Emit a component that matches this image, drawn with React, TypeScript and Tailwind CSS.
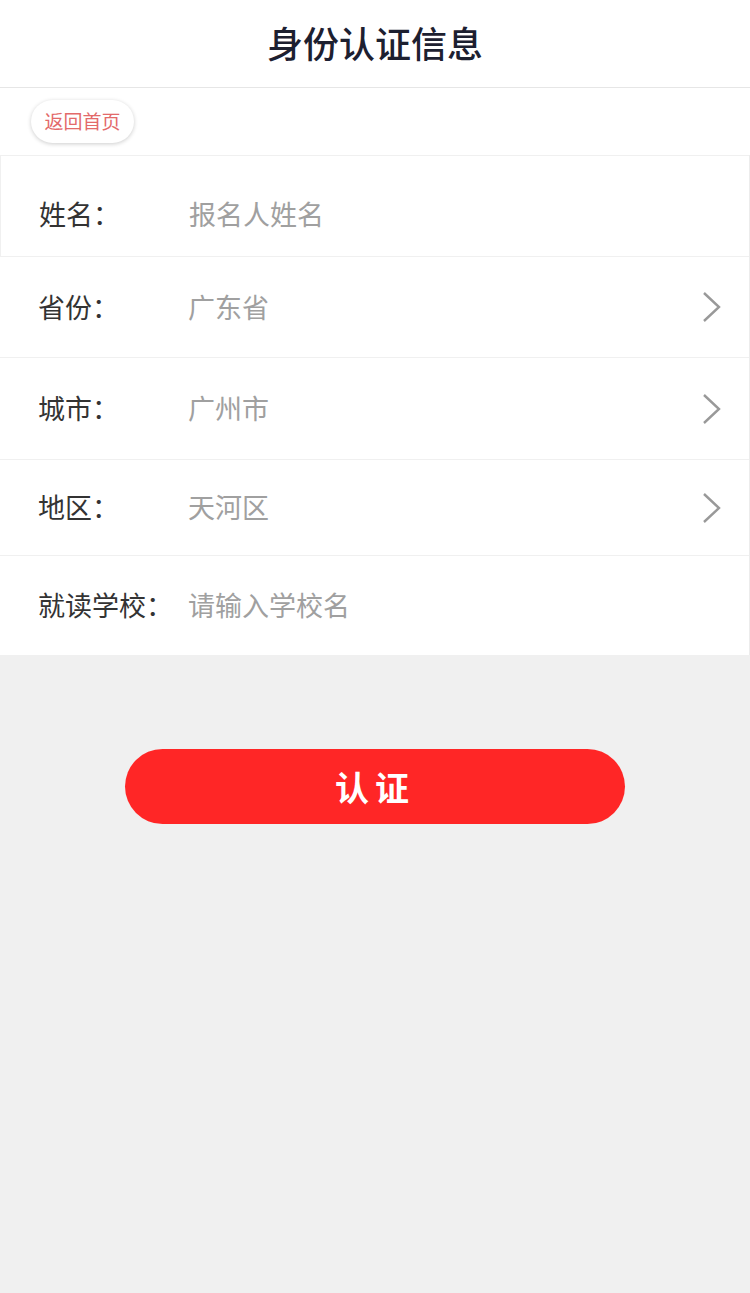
const font = { fontFamily: '"Noto Sans CJK SC", "Noto Sans", sans-serif' };

type Row = { label: string; value: string; arrow?: boolean; h: string };

const rows: Row[] = [
  { label: "姓名：", value: "报名人姓名", h: "h-[101px] pt-[16px]" },
  { label: "省份：", value: "广东省", arrow: true, h: "h-[101px]" },
  { label: "城市：", value: "广州市", arrow: true, h: "h-[102px]" },
  { label: "地区：", value: "天河区", arrow: true, h: "h-[96px]" },
  { label: "就读学校：", value: "请输入学校名", h: "h-[100px]" },
];

function Chevron() {
  return (
    <svg width="20" height="32" viewBox="0 0 20 32" fill="none" className="mr-[27px]">
      <polyline points="2,2 17,16 2,30" stroke="#999" strokeWidth="2.4" strokeLinejoin="miter" />
    </svg>
  );
}

export default function App() {
  return (
    <div className="flex min-h-[1293px] w-[750px] flex-col bg-[#f0f0f0]" style={font}>
      <div className="flex h-[88px] items-center justify-center border-b border-[#e6e6e6] bg-white pb-[4px]">
        <h1 className="text-[36px] font-medium text-[#1d2030]">身份认证信息</h1>
      </div>
      <div className="flex h-[67px] items-center bg-white px-[31px]">
        <button className="flex h-[43px] w-[103px] items-center justify-center rounded-full bg-white text-[19px] text-[#e36a6a] shadow-[0_1px_4px_rgba(0,0,0,0.2)]">
          返回首页
        </button>
      </div>
      <div className="flex flex-col border-r border-[#ececec] bg-white">
        {rows.map((r, i) => (
          <div
            key={r.label}
            className={`flex ${r.h} items-center border-t border-[#f0f0f0] pl-[38px] ${i === 0 ? "border-l" : ""}`}
          >
            <span className="w-[150px] text-[27px] text-[#333]">{r.label}</span>
            <span className="flex-1 text-[27px] text-[#a0a0a0]">{r.value}</span>
            {r.arrow && <Chevron />}
          </div>
        ))}
      </div>
      <div className="flex justify-center pt-[94px]">
        <button className="flex h-[75px] w-[500px] items-center justify-center rounded-full bg-[#ff2626] text-[34px] font-bold tracking-[6px] text-white">
          认证
        </button>
      </div>
    </div>
  );
}
